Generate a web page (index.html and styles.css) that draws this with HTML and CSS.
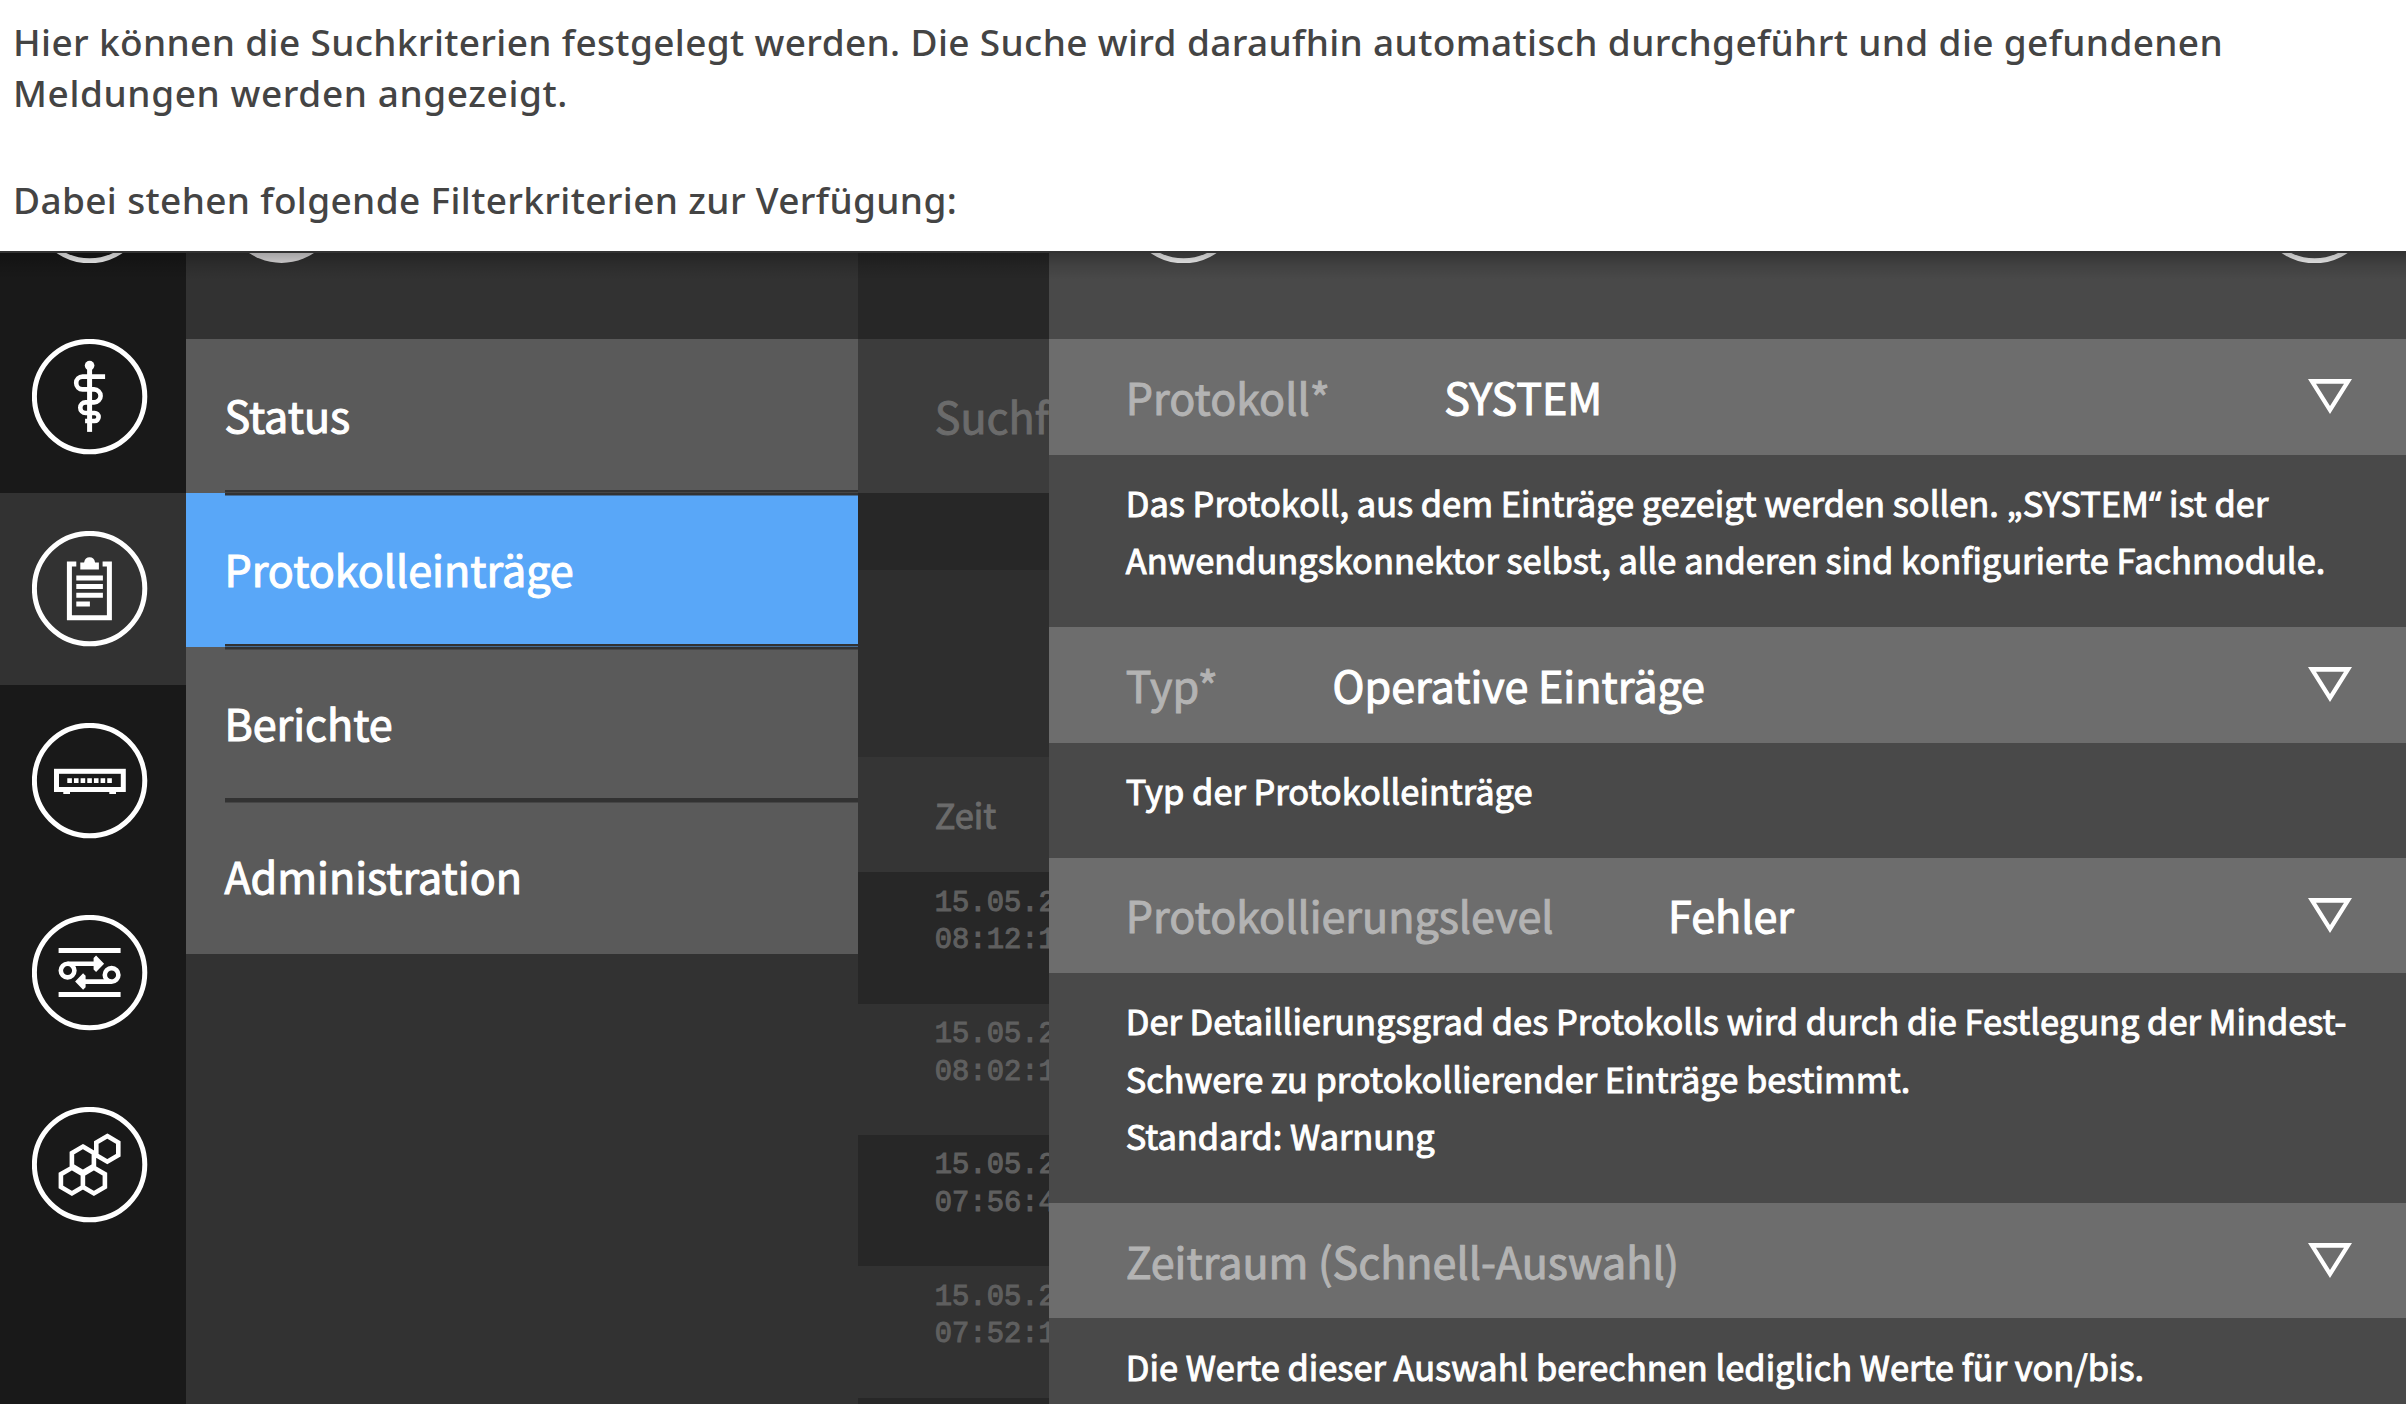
FILE: index.html
```html
<!DOCTYPE html>
<html lang="de">
<head>
<meta charset="utf-8">
<title>Protokolleinträge</title>
<link rel="stylesheet" href="styles.css">
</head>
<body>
<header class="intro">
  <p>Hier können die Suchkriterien festgelegt werden. Die Suche wird daraufhin automatisch durchgeführt und die gefundenen<br><span class="wide">Meldungen werden angezeigt.</span></p>
  <p>Dabei stehen folgende Filterkriterien zur Verfügung:</p>
</header>
<main class="app">
  <nav class="rail">
    <div class="rail-item rail-cut">
      <svg class="ring" viewBox="2.4 2.4 115.2 115.2"><circle cx="60" cy="60" r="55.2"/></svg>
    </div>
    <div class="rail-item">
      <svg class="ring" viewBox="2.4 2.4 115.2 115.2">
        <circle cx="60" cy="60" r="55.2"/>
        <circle class="solid" cx="60" cy="29" r="4.8"/>
        <path d="M60 29V95.3"/>
        <path class="thin" d="M75.5 40H53a6.4 6.4 0 0 0 0 12.8H64.5a6.5 6.5 0 0 1 0 13H56a5.3 5.3 0 0 0 0 10.6H65a4 4 0 0 1 0 8H55.5"/>
      </svg>
    </div>
    <div class="rail-item rail-active">
      <svg class="ring" viewBox="2.4 2.4 115.2 115.2">
        <circle cx="60" cy="60" r="55.2"/>
        <path d="M46.7 35.5H39.8V89.2H79.8V35.5H73"/>
        <path class="solid" d="M50.7 40.8V33.8H54.5Q55.5 28.7 60 28.7T65.5 33.8H69.3V40.8Z"/>
        <path d="M46.7 49.3H73.3M46.7 58H73.3M46.7 66.7H73.3M46.7 75.4H60.3"/>
      </svg>
    </div>
    <div class="rail-item">
      <svg class="ring" viewBox="2.4 2.4 115.2 115.2">
        <circle cx="60" cy="60" r="55.2"/>
        <rect x="26.9" y="50.7" width="66.8" height="18.2"/>
        <path class="solid" d="M33.7 70H40.4V73.4H33.7ZM79.7 70H86.4V73.4H79.7Z"/>
        <path class="thin" d="M37.7 60H82.3" stroke-dasharray="4.6 2.06"/>
      </svg>
    </div>
    <div class="rail-item">
      <svg class="ring" viewBox="2.4 2.4 115.2 115.2">
        <circle cx="60" cy="60" r="55.2"/>
        <path d="M29 38H91M29 82H91"/>
        <circle class="thin" cx="38" cy="58" r="6.8"/>
        <circle class="thin" cx="82" cy="62.3" r="6.8"/>
        <path class="thin" d="M38 51.2H68M82 69H52"/>
        <path class="solid" d="M64 45.5L66.5 43L74.5 51.2L66.5 59.5L64 57ZM56 63.2L53.5 60.7L45.5 69L53.5 77.2L56 74.7Z"/>
      </svg>
    </div>
    <div class="rail-item">
      <svg class="ring" viewBox="2.4 2.4 115.2 115.2">
        <circle cx="60" cy="60" r="55.2"/>
        <path class="thin" d="M77.7 31.5L88.7 37.9V50.7L77.7 57.1L66.7 50.7V37.9ZM53.3 42L64.3 48.4V61.2L53.3 67.6L42.3 61.2V48.4ZM42.3 63.2L53.3 69.6V82.4L42.3 88.8L31.3 82.4V69.6ZM64.3 63.2L75.3 69.6V82.4L64.3 88.8L53.3 82.4V69.6Z"/>
      </svg>
    </div>
  </nav>
  <nav class="menu">
    <div class="menu-top"><div class="disc"></div></div>
    <a class="menu-item">Status</a>
    <a class="menu-item menu-active">Protokolleinträge</a>
    <a class="menu-item">Berichte</a>
    <a class="menu-item">Administration</a>
  </nav>
  <section class="log">
    <div class="log-top"></div>
    <div class="log-search">Suchf</div>
    <div class="log-gap"></div>
    <div class="log-blank"></div>
    <div class="log-head">Zeit</div>
    <div class="log-row">15.05.2<br>08:12:1</div>
    <div class="log-row">15.05.2<br>08:02:1</div>
    <div class="log-row">15.05.2<br>07:56:4</div>
    <div class="log-row">15.05.2<br>07:52:1</div>
    <div class="log-row"></div>
  </section>
  <section class="filter">
    <div class="filter-top">
      <svg class="ring" viewBox="2.4 2.4 115.2 115.2"><circle cx="60" cy="60" r="55.2"/></svg>
      <svg class="ring" viewBox="2.4 2.4 115.2 115.2"><circle cx="60" cy="60" r="55.2"/></svg>
    </div>
    <div class="field"><span class="label">Protokoll*</span><span class="value">SYSTEM</span>
      <svg class="arrow" viewBox="0 0 44 35"><path d="M0 0H44L22 35ZM8 4.8L22 27L36 4.8Z"/></svg></div>
    <p class="help">Das Protokoll, aus dem Einträge gezeigt werden sollen. „SYSTEM<span class="quote">“</span> ist der<br>Anwendungskonnektor selbst, alle anderen sind konfigurierte Fachmodule.</p>
    <div class="field"><span class="label">Typ*</span><span class="value">Operative Einträge</span>
      <svg class="arrow" viewBox="0 0 44 35"><path d="M0 0H44L22 35ZM8 4.8L22 27L36 4.8Z"/></svg></div>
    <p class="help">Typ der Protokolleinträge</p>
    <div class="field"><span class="label">Protokollierungslevel</span><span class="value">Fehler</span>
      <svg class="arrow" viewBox="0 0 44 35"><path d="M0 0H44L22 35ZM8 4.8L22 27L36 4.8Z"/></svg></div>
    <p class="help">Der Detaillierungsgrad des Protokolls wird durch die Festlegung der Mindest-<br>Schwere zu protokollierender Einträge bestimmt.<br>Standard: Warnung</p>
    <div class="field"><span class="label">Zeitraum (Schnell-Auswahl)</span>
      <svg class="arrow" viewBox="0 0 44 35"><path d="M0 0H44L22 35ZM8 4.8L22 27L36 4.8Z"/></svg></div>
    <p class="help">Die Werte dieser Auswahl berechnen lediglich Werte für von/bis.</p>
  </section>
</main>
</body>
</html>
```
FILE: styles.css
```css
* { box-sizing: border-box; }

body {
  margin: 0;
  width: 2406px;
  height: 1404px;
  overflow: hidden;
  display: flex;
  flex-direction: column;
  background: #fff;
}

p { margin: 0; }

.intro {
  flex: none;
  height: 251px;
  padding: 16px 0 0 13px;
  display: flex;
  flex-direction: column;
  gap: 56px;
  font: 500 37px/51px "Noto Sans", sans-serif;
  letter-spacing: 0.36px;
  color: #444;
  white-space: nowrap;
}

.wide { letter-spacing: 0.6px; }

.app {
  position: relative;
  flex: 1;
  min-height: 0;
  display: grid;
  grid-template-columns: 186px 672px 191px 1fr;
  border-top: 2px solid #333;
  overflow: hidden;
  font: 400 43.05px/1 "Noto Sans CJK SC", sans-serif;
  color: #fff;
  background: #323232;
}

/* shadow cast by the intro block */
.app::before {
  content: "";
  position: absolute;
  inset: 0 0 auto;
  height: 27px;
  background: linear-gradient(rgba(0, 0, 0, 0.28), rgba(0, 0, 0, 0.1) 50%, transparent);
}

.rail { background: #191919; }

.rail-item {
  height: 192px;
  padding-left: 32.4px;
  display: flex;
  align-items: center;
}

.rail-cut {
  height: 48px;
  padding-bottom: 38px;
  align-items: flex-end;
}

.rail-active { background: #323232; }

.ring {
  flex: none;
  width: 115.2px;
  height: 115.2px;
  fill: none;
  stroke: #fff;
  stroke-width: 5;
}

.ring .thin { stroke-width: 4.6; }
.ring .solid { fill: #fff; stroke: none; }

.menu-top {
  height: 86.4px;
  padding-left: 38px;
  overflow: hidden;
}

.disc {
  width: 115.2px;
  height: 115.2px;
  margin-top: -105.4px;
  border-radius: 50%;
  background: #e6e4e5;
}

.menu-item {
  --line: linear-gradient(#323232, #323232);
  display: block;
  height: 153.6px;
  padding-left: 38.4px;
  line-height: 150.6px;
  background: #5a5a5a;
  -webkit-text-stroke: 1.1px currentColor;
}

.menu-item + .menu-item {
  background: var(--line) 38.6px 0 / 100% 2.5px no-repeat #5a5a5a;
}

.menu-item:not(:last-child) {
  background: var(--line) 38.6px 100% / 100% 2.5px no-repeat #5a5a5a;
}

.menu-item + .menu-item:not(:last-child) {
  background:
    var(--line) 38.6px 0 / 100% 2.5px no-repeat,
    var(--line) 38.6px 100% / 100% 2.5px no-repeat,
    #5a5a5a;
}

.menu-item.menu-active:not(:last-child) { background-color: #59a7f8; }

.log {
  overflow: hidden;
  color: #6b6b6b;
  background: #323232;
}

.log > div { padding-left: 76.8px; }

.log-top { height: 86.4px; background: #272727; }

.log-search {
  height: 153.6px;
  line-height: 152px;
  background: #3c3c3c;
  -webkit-text-stroke: 1px currentColor;
}

.log-gap { height: 76.8px; background: #272727; }
.log-blank { height: 187.5px; background: #2e2e2e; }

.log-head {
  height: 115.2px;
  font-size: 34.4px;
  line-height: 115.2px;
  background: #353535;
  -webkit-text-stroke: 1px currentColor;
}

.log-row {
  height: 131.3px;
  padding-top: 12.4px;
  font: 28.8px/37.4px "Liberation Mono", monospace;
  white-space: nowrap;
  color: #5f5f5f;
  background: #323232;
  -webkit-text-stroke: 1.1px currentColor;
}

.log-row:nth-child(even) { background: #272727; }

.filter { background: #494949; }

.filter-top {
  height: 86.4px;
  padding: 0 33.4px 0 77px;
  display: flex;
  justify-content: space-between;
  overflow: hidden;
}

.filter-top .ring { margin-top: -105.4px; }

.field {
  height: 115.2px;
  padding: 0 54px 0 76.8px;
  display: flex;
  align-items: center;
  gap: 114.6px;
  line-height: 64px;
  background: #6d6d6d;
  white-space: nowrap;
}

.label, .value { padding-bottom: 2px; }
.label { color: #b3b3b3; -webkit-text-stroke: 1px currentColor; }
.value { -webkit-text-stroke: 1.1px currentColor; }

.arrow {
  width: 44px;
  height: 35px;
  margin-left: auto;
  fill: #fff;
  fill-rule: evenodd;
}

.help {
  padding: 19.2px 0 38.4px 76.8px;
  font-size: 34.4px;
  line-height: 57.6px;
  white-space: nowrap;
  -webkit-text-stroke: 1px currentColor;
}

.quote {
  font-family: "Noto Sans", sans-serif;
  line-height: 1;
}
```
